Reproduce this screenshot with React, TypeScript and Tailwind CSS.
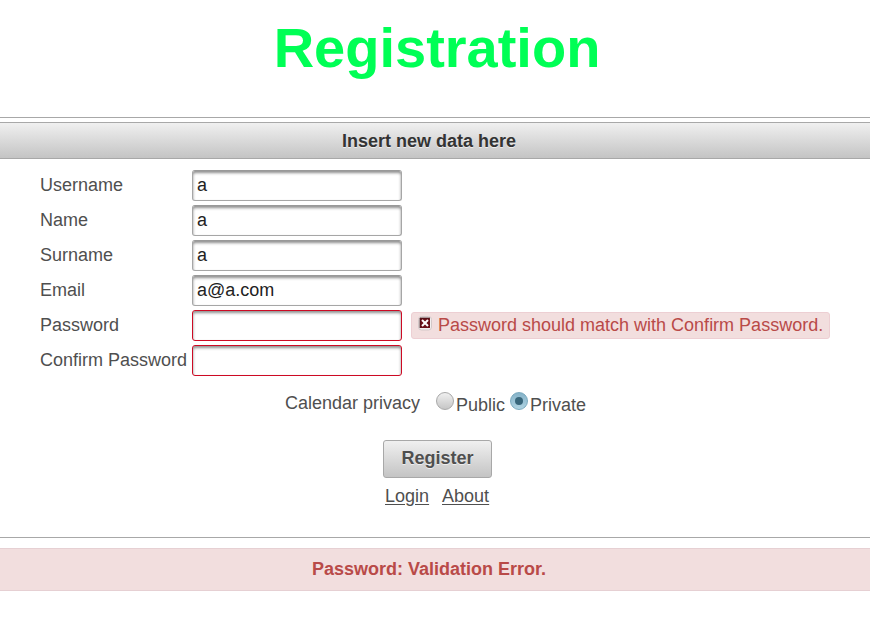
type FieldProps = {
  label: string;
  value?: string;
  invalid?: boolean;
  type?: string;
  message?: string;
};

const inputBase =
  'block h-[31px] w-[210px] shrink-0 rounded-[3px] border bg-white pl-1 pb-px text-[18px] text-[#222] outline-none';

function ErrorIcon() {
  return (
    <svg width="16" height="16" viewBox="0 0 16 16" className="shrink-0">
      <rect x="1.5" y="1.5" width="13" height="13.5" rx="3" fill="#f3f0f0" stroke="#d3c8c8" />
      <rect x="3" y="3" width="10" height="10" rx="0.5" fill="#6a1018" />
      <path d="M3 13V3h10" fill="none" stroke="#3d1014" strokeWidth="0.8" />
      <path d="M5 5l6 6M11 5l-6 6" stroke="#fff" strokeWidth="2" />
    </svg>
  );
}

function Field({ label, value = '', invalid = false, type = 'text', message }: FieldProps) {
  return (
    <div className="flex h-[31px]">
      <label className="w-[152px] shrink-0 whitespace-nowrap pt-px leading-7">{label}</label>
      <input
        type={type}
        defaultValue={value}
        className={`${inputBase} ${
          invalid
            ? 'border-[#cd0a24] shadow-[inset_0_2px_3px_#8f8f8f]'
            : 'border-[#a6a6a6] border-t-[#999] shadow-[inset_0_2px_3px_#8f8f8f]'
        }`}
      />
      {message && (
        <div className="ml-[9px] mt-0.5 flex h-[27px] w-[419px] shrink-0 rounded-[3px] border border-[#edcfd3] bg-[#f2dede] pl-[5px] text-[#b94a48]">
          <span className="pt-0.5">
            <ErrorIcon />
          </span>
          <span className="ml-[5px] whitespace-nowrap leading-6">{message}</span>
        </div>
      )}
    </div>
  );
}

function Radio({ label, checked = false }: { label: string; checked?: boolean }) {
  return (
    <label className="flex">
      <span
        className={`mr-0.5 flex size-[18px] items-center justify-center rounded-full border ${
          checked
            ? 'border-[#79a9be] bg-linear-to-b from-[#85b2c8] to-[#afd3e2]'
            : 'border-[#a8a8a8] bg-linear-to-b from-[#f0f0f0] to-[#c6c6c6]'
        }`}
      >
        {checked && <span className="size-2 rounded-full bg-[#38667b]" />}
      </span>
      <span className="pt-[3px] leading-5">{label}</span>
    </label>
  );
}

export default function App() {
  return (
    <main className="h-[624px] w-[870px] overflow-hidden bg-white font-['Liberation_Sans',Arial,sans-serif] text-[18px] text-[#4f4f4f]">
      <header className="h-[118px] border-b border-[#a8a8a8] pt-4 pl-1">
        <h1 className="text-center text-[56px] font-bold leading-[64px] text-[#00ff55]">Registration</h1>
      </header>
      <section>
        <h2 className="mt-1 h-[37px] border-y border-[#a8a8a8] bg-linear-to-b from-[#f0f0f0] to-[#c4c4c4] pr-3 text-center font-bold leading-9 text-[#333] [text-shadow:0_1px_0_#eee]">
          Insert new data here
        </h2>
        <form className="flex flex-col">
          <div className="mt-[11px] flex flex-col gap-1 pl-10">
            <Field label="Username" value="a" />
            <Field label="Name" value="a" />
            <Field label="Surname" value="a" />
            <Field label="Email" value="a@a.com" />
            <Field
              label="Password"
              type="password"
              invalid
              message="Password should match with Confirm Password."
            />
            <Field label="Confirm Password" type="password" invalid />
          </div>
          <div className="mt-4 flex h-6 pl-[285px]">
            <span className="w-[151px] pt-px leading-5">Calendar privacy</span>
            <Radio label="Public" />
            <span className="w-[5px]" />
            <Radio label="Private" checked />
          </div>
          <button
            type="button"
            className="ml-[383px] mt-6 h-[38px] w-[109px] rounded-[3px] border border-[#a8a8a8] bg-linear-to-b from-[#f0f0f0] to-[#c4c4c4] pb-0.5 font-bold [text-shadow:0_1px_0_#eee]"
          >
            Register
          </button>
        </form>
        <nav className="mt-2 flex h-5 gap-[13px] pl-[385px] leading-5 underline underline-offset-2">
          <a href="#login">Login</a>
          <a href="#about">About</a>
        </nav>
      </section>
      <hr className="mt-[31px] border-[#a8a8a8]" />
      <div className="mt-[10px] h-[43px] border-y border-[#e6d0d3] bg-[#f2dede] pr-3 text-center font-bold leading-10 text-[#b94a48]">
        Password: Validation Error.
      </div>
    </main>
  );
}
